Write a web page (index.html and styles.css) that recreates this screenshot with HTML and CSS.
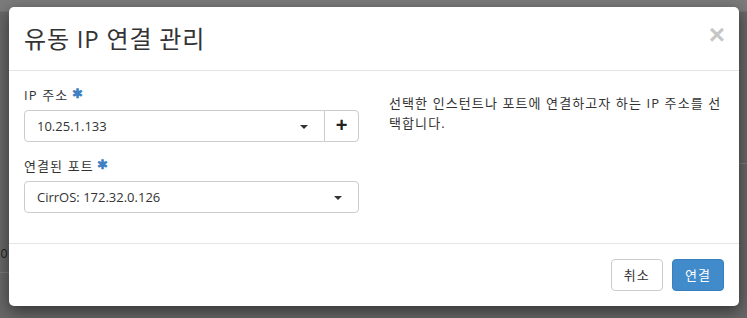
FILE: index.html
```html
<!DOCTYPE html>
<html lang="ko">
<head>
<meta charset="utf-8">
<title>유동 IP 연결 관리</title>
<link rel="stylesheet" href="styles.css">
</head>
<body>

<!-- 뒤쪽 페이지 (backdrop 아래) -->
<div class="page">
    <div class="page-top"></div>
    <div class="page-line line-right"></div>
    <div class="page-cell">이</div>
    <div class="page-line line-left"></div>
</div>

<!-- 모달 -->
<div class="modal">
    <div class="modal-header">
        <h3 class="modal-title">유동 IP 연결 관리</h3>
        <span class="close">&times;</span>
    </div>
    <div class="modal-body">
        <div class="col">
            <div class="form-group">
                <label><span class="ko">IP 주소</span> <span class="req">&#10033;</span></label>
                <div class="input-group">
                    <div class="select grouped">10.25.1.133 <i class="caret"></i></div>
                    <span class="btn-add">+</span>
                </div>
            </div>
            <div class="form-group">
                <label><span class="ko">연결된 포트</span> <span class="req">&#10033;</span></label>
                <div class="select">CirrOS: 172.32.0.126 <i class="caret"></i></div>
            </div>
        </div>
        <div class="col">
            <p class="help ko">선택한 인스턴트나 포트에 연결하고자 하는 IP 주소를 선택합니다.</p>
        </div>
    </div>
    <div class="modal-footer">
        <a href="#" class="btn ko">취소</a>
        <a href="#" class="btn btn-primary ko">연결</a>
    </div>
</div>

</body>
</html>
```

FILE: styles.css
```css
*{ margin:0; padding:0; box-sizing:border-box;}
body{ font-family:"Open Sans","Noto Sans CJK KR",sans-serif; font-size:13px; color:#333; background:#676767; height:318px; overflow:hidden; position:relative;}
.ko{ letter-spacing:1.1px;}

/* backdrop 아래 페이지 */
.page{ position:absolute; left:0; top:0; width:100%; height:100%;}
.page-top{ height:12px; background:#7b7b7b; border-bottom:1px solid #727272;}
.page-line{ position:absolute; height:1px; background:#7a7a7a;}
.line-right{ top:163px; right:0; width:20px;}
.line-left{ top:272px; left:0; width:20px;}
.page-cell{ position:absolute; left:0; top:244px; font-size:13px; color:#222;}

.modal{ position:relative; margin:7px 0 0 9px; width:730px; background:#fff; border-radius:5px; box-shadow:0 5px 15px rgba(0,0,0,.5);}

.modal-header{ position:relative; padding:18px 15px; border-bottom:1px solid #e5e5e5;}
.modal-title{ font-size:24px; line-height:27px; font-weight:normal; color:#333; letter-spacing:0.8px;}
.close{ position:absolute; top:13px; right:14px; font-family:"Liberation Sans",sans-serif; font-size:28px; line-height:30px; font-weight:bold; color:#000; opacity:.22;}

.modal-body{ display:flex; gap:30px; padding:15px;}
.col{ flex:1; min-width:0;}
.form-group{ margin-bottom:15px;}
.form-group label{ display:block; line-height:19px; margin-bottom:5px; color:#333;}
.req{ color:#3f80c3; font-size:13px; font-weight:bold; position:relative; top:-2px;}

.input-group{ display:flex;}
.select{ position:relative; height:32px; line-height:30px; padding:0 12px; border:1px solid #ccc; border-radius:4px; color:#333; background:#fff;}
.select.grouped{ flex:1; border-radius:4px 0 0 4px;}
.caret{ position:absolute; right:16px; top:14px; width:0; height:0; border-top:4px solid #333; border-left:4px solid transparent; border-right:4px solid transparent;}
.btn-add{ width:35px; height:32px; margin-left:-1px; border:1px solid #ccc; border-radius:0 4px 4px 0; text-align:center; font-family:"Liberation Sans",sans-serif; font-size:20px; font-weight:bold; line-height:28px; color:#222;}

.help{ line-height:20px; padding-top:7px; color:#333;}

.modal-footer{ display:flex; justify-content:flex-end; gap:9px; padding:15px; border-top:1px solid #e5e5e5;}
.btn{ display:inline-block; height:32px; line-height:30px; padding:0 12px; border:1px solid #ccc; border-radius:4px; color:#333; background:#fff; text-decoration:none;}
.btn-primary{ background:#428bca; border-color:#3a7fbd; color:#fff;}
```
